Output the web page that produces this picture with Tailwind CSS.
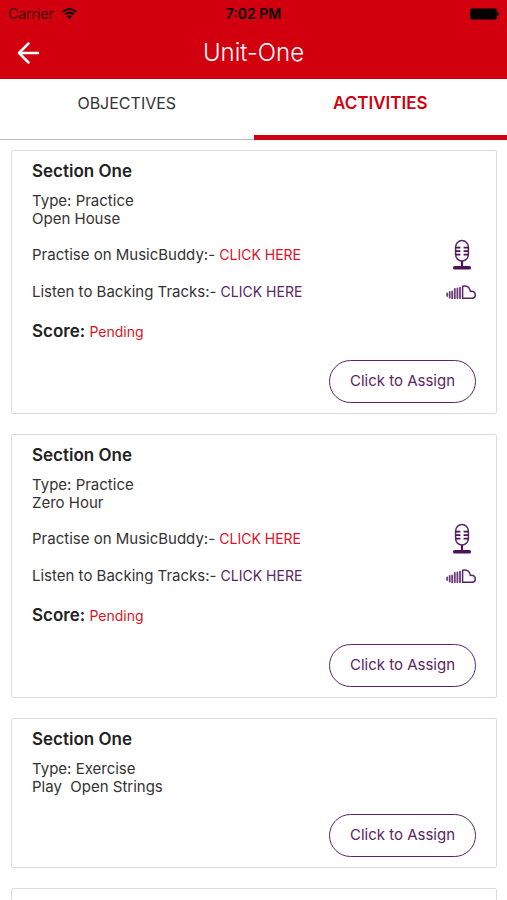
<!DOCTYPE html>
<html lang="en">
<head>
<meta charset="utf-8">
<meta name="viewport" content="width=device-width, initial-scale=1">
<title>Unit-One</title>
<script src="https://cdn.jsdelivr.net/npm/@tailwindcss/browser@4"></script>
</head>
<body class="flex h-screen flex-col overflow-hidden bg-white font-['Inter',sans-serif] text-[#333333]">
<svg class="hidden" aria-hidden="true">
  <symbol id="mic" viewBox="0 0 20 32">
    <rect x="3.600" y="1.600" width="12.800" height="20.400" rx="6.400" fill="none" stroke="#5a2466" stroke-width="1.500"/>
    <path d="M3.600 8.600h4.800M3.600 12.100h4.800M3.600 15.600h4.800M11.600 8.600h4.800M11.600 12.100h4.800M11.600 15.600h4.800" stroke="#4d1259" stroke-width="1.600"/>
    <path d="M10 22v6" stroke="#4d1259" stroke-width="2.200"/>
    <rect x="1" y="27" width="18" height="3.600" rx="1.600" fill="#4d1259"/>
  </symbol>
  <symbol id="cloud" viewBox="0 0 30 14">
    <path d="M1.200 8.500v2.400M3.700 7v5.500M6.200 6.400v6.800M8.800 3.800v9.400M11.400 3.400v9.800M14 2.600v10.600" stroke="#6b3a78" stroke-width="1.800" stroke-linecap="round"/>
    <path d="M16.600 1.300c4-1.400 7.600 1.200 7.800 5.200 2.600-.7 4.900.8 4.900 3.300 0 2.100-1.500 3.500-3.600 3.500h-9.100z" fill="none" stroke="#5a2466" stroke-width="1.500" stroke-linejoin="round"/>
  </symbol>
</svg>

<header class="bg-[#d2000f]">
  <div class="grid h-[27px] grid-cols-3 items-center px-2 text-sm leading-4 text-black">
    <div class="flex items-center gap-2">
      <span class="text-black/75">Carrier</span>
      <svg class="h-[11px] w-[15px]" viewBox="0 0 15 11" fill="none" stroke="#000" stroke-width="1.800" aria-label="Wi-Fi"><path d="M.7 3.900a9.600 9.600 0 0 1 13.600 0M3 6.400a6.400 6.400 0 0 1 9 0"/><path d="M7.500 10.800 4.900 8.200a3.700 3.700 0 0 1 5.200 0z" fill="#000" stroke="none"/></svg>
    </div>
    <span class="text-center font-semibold">7:02 PM</span>
    <svg class="h-3 w-[30px] justify-self-end" viewBox="0 0 30 12" aria-label="Battery full"><rect x="1" y="0.500" width="27" height="11" rx="2" fill="#000"/><path d="M28.500 4c2 .6 2 3.400 0 4z" fill="#000"/></svg>
  </div>
  <div class="grid h-[52px] grid-cols-[40px_1fr_40px] items-center px-2">
    <button type="button" aria-label="Back" class="flex h-10 w-10 items-center justify-center">
      <svg class="h-6 w-6" viewBox="0 0 24 24" fill="none" stroke="#fff" stroke-width="2.500" stroke-linecap="round" stroke-linejoin="round"><path d="M22 12H3M12.500 2.500 3 12l9.500 9.500"/></svg>
    </button>
    <h1 class="text-center text-2xl font-light text-white">Unit-One</h1>
  </div>
</header>

<nav class="grid h-[61px] shrink-0 grid-cols-2 leading-6">
  <a href="#objectives" class="border-b border-[#bbbbbb] pt-3 text-center text-[16px] leading-6">OBJECTIVES</a>
  <a href="#activities" aria-current="page" class="border-b-5 border-[#cf0010] pt-3 text-center text-[17px] leading-6 font-semibold text-[#cf0010]">ACTIVITIES</a>
</nav>

<main id="activities" class="flex min-h-0 flex-1 flex-col gap-5 overflow-y-auto pt-[10px] pr-[10px] pl-[11px] [scrollbar-width:none]">
  <article class="shrink-0 rounded-xs border border-[#dcdcdc] px-5 py-[10px]">
    <h2 class="text-[17px] leading-5 font-semibold text-[#222222]">Section One</h2>
    <p class="mt-[11px] text-[15px] leading-[18px]">Type: Practice<br>Open House</p>
    <div class="mt-[11px] flex h-8 items-center justify-between text-[15px]">
      <p>Practise on MusicBuddy:- <a href="#buddy" class="text-sm text-[#d9142a]">CLICK HERE</a></p>
      <svg class="mr-1 h-8 w-5" aria-hidden="true"><use href="#mic"/></svg>
    </div>
    <div class="mt-[5px] flex h-8 items-center justify-between text-[15px]">
      <p>Listen to Backing Tracks:- <a href="#tracks" class="text-sm text-[#5a2466]">CLICK HERE</a></p>
      <svg class="h-[14px] w-[30px]" aria-hidden="true"><use href="#cloud"/></svg>
    </div>
    <p class="mt-3 text-[17px] leading-[22px] font-semibold text-[#222222]">Score: <span class="text-sm font-normal text-[#d9142a]">Pending</span></p>
    <button type="button" class="mt-[18px] ml-auto block h-[43px] w-[147px] rounded-full border border-[#5a2466] text-[15px] text-[#5a2466]">Click to Assign</button>
  </article>

  <article class="shrink-0 rounded-xs border border-[#dcdcdc] px-5 py-[10px]">
    <h2 class="text-[17px] leading-5 font-semibold text-[#222222]">Section One</h2>
    <p class="mt-[11px] text-[15px] leading-[18px]">Type: Practice<br>Zero Hour</p>
    <div class="mt-[11px] flex h-8 items-center justify-between text-[15px]">
      <p>Practise on MusicBuddy:- <a href="#buddy" class="text-sm text-[#d9142a]">CLICK HERE</a></p>
      <svg class="mr-1 h-8 w-5" aria-hidden="true"><use href="#mic"/></svg>
    </div>
    <div class="mt-[5px] flex h-8 items-center justify-between text-[15px]">
      <p>Listen to Backing Tracks:- <a href="#tracks" class="text-sm text-[#5a2466]">CLICK HERE</a></p>
      <svg class="h-[14px] w-[30px]" aria-hidden="true"><use href="#cloud"/></svg>
    </div>
    <p class="mt-3 text-[17px] leading-[22px] font-semibold text-[#222222]">Score: <span class="text-sm font-normal text-[#d9142a]">Pending</span></p>
    <button type="button" class="mt-[18px] ml-auto block h-[43px] w-[147px] rounded-full border border-[#5a2466] text-[15px] text-[#5a2466]">Click to Assign</button>
  </article>

  <article class="shrink-0 rounded-xs border border-[#dcdcdc] px-5 py-[10px]">
    <h2 class="text-[17px] leading-5 font-semibold text-[#222222]">Section One</h2>
    <p class="mt-[11px] text-[15px] leading-[18px]">Type: Exercise<br>Play&nbsp; Open Strings</p>
    <button type="button" class="mt-[18px] ml-auto block h-[43px] w-[147px] rounded-full border border-[#5a2466] text-[15px] text-[#5a2466]">Click to Assign</button>
  </article>

  <article class="min-h-36 shrink-0 rounded-xs border border-[#dcdcdc]"></article>
</main>
</body>
</html>
